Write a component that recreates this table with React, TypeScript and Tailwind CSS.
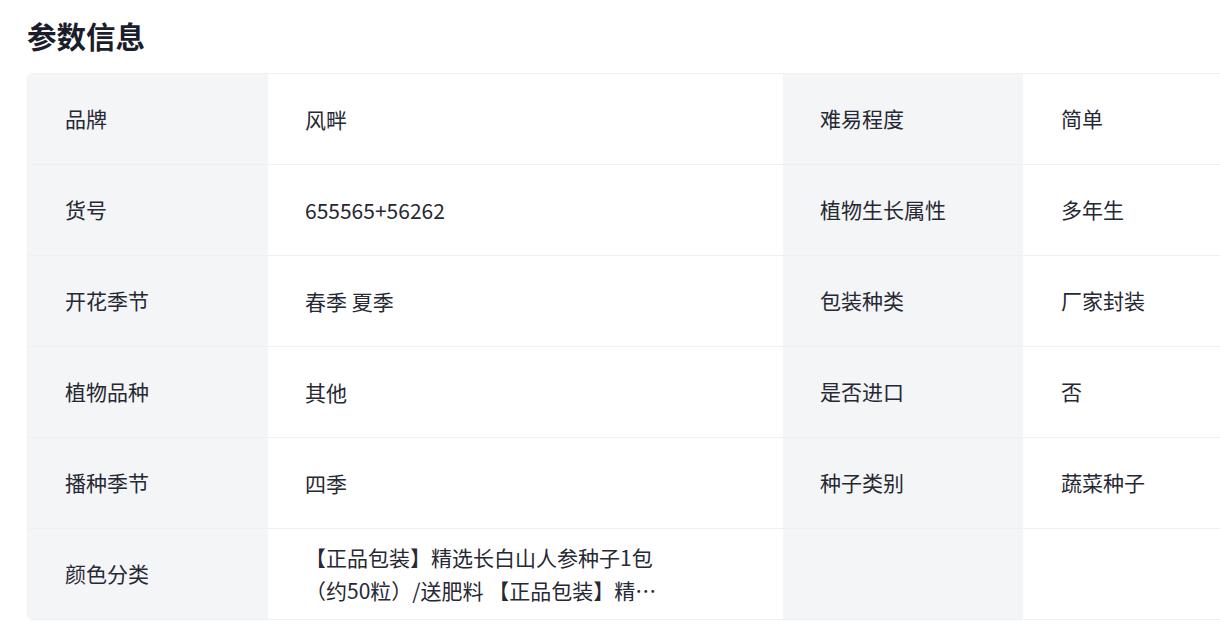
import React from "react";

const rows: [string, string, string, string][] = [
  ["品牌", "风畔", "难易程度", "简单"],
  ["货号", "655565+56262", "植物生长属性", "多年生"],
  ["开花季节", "春季 夏季", "包装种类", "厂家封装"],
  ["植物品种", "其他", "是否进口", "否"],
  ["播种季节", "四季", "种子类别", "蔬菜种子"],
  [
    "颜色分类",
    "【正品包装】精选长白山人参种子1包（约50粒）/送肥料 【正品包装】精选长白山人参种子2包（约100粒）/送肥料",
    "",
    "",
  ],
];

export default function App() {
  return (
    <div
      className="w-[1220px] h-[624px] overflow-hidden bg-white pl-[27px] text-[#262833]"
      style={{ fontFamily: '"Noto Sans CJK SC", "Noto Sans", sans-serif' }}
    >
      <div className="h-[73px] flex items-center pb-[2px]">
        <h2 className="text-[29.5px] font-bold text-[#1b1d2a] leading-none">参数信息</h2>
      </div>
      <div className="w-[1510px] border border-[#eff0f2] rounded-md overflow-hidden">
        {rows.map((r, i) => (
          <div
            key={i}
            className={`grid grid-cols-[240px_515px_240px_515px] ${
              i < rows.length - 1 ? "border-b border-[#eff0f2]" : ""
            }`}
          >
            <div className="h-[90px] bg-[#f4f5f7] flex items-center pl-[37px] text-[21px]">{r[0]}</div>
            <div className="h-[90px] bg-white flex items-center pl-[37px] text-[21px]">
              <span className="max-w-[360px] line-clamp-2 leading-[33px]">{r[1]}</span>
            </div>
            <div className="h-[90px] bg-[#f4f5f7] flex items-center pl-[37px] text-[21px]">{r[2]}</div>
            <div className="h-[90px] bg-white flex items-center pl-[38px] text-[21px]">{r[3]}</div>
          </div>
        ))}
      </div>
    </div>
  );
}
